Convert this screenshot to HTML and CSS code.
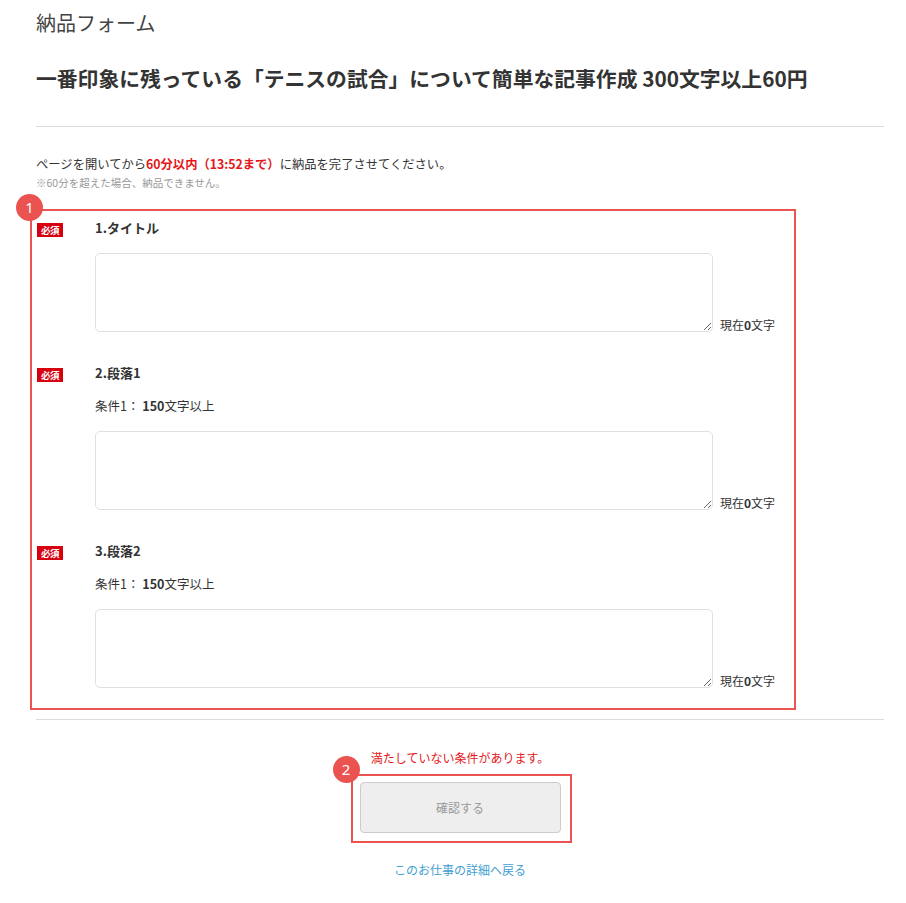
FILE: index.html
```html
<!DOCTYPE html>
<html lang="ja">
<head>
<meta charset="utf-8">
<title>納品フォーム</title>
<link rel="stylesheet" href="styles.css">
</head>
<body>
<div class="page">
  <h1 class="page-title">納品フォーム</h1>
  <h2 class="job-title">一番印象に残っている「テニスの試合」について簡単な記事作成 300文字以上60円</h2>
  <hr class="rule">
  <p class="limit">ページを開いてから<span class="limit-em">60分以内（13:52まで）</span>に納品を完了させてください。</p>
  <p class="limit-note">※60分を超えた場合、納品できません。</p>

  <div class="annot annot-form">
    <span class="annot-num">1</span>
    <div class="item">
      <span class="req">必須</span>
      <div class="item-body">
        <div class="item-label">1.タイトル</div>
        <div class="field-row">
          <textarea class="field"></textarea>
          <span class="counter">現在<b>0</b>文字</span>
        </div>
      </div>
    </div>
    <div class="item">
      <span class="req">必須</span>
      <div class="item-body">
        <div class="item-label">2.段落1</div>
        <div class="cond">条件1： <b>150</b>文字以上</div>
        <div class="field-row">
          <textarea class="field"></textarea>
          <span class="counter">現在<b>0</b>文字</span>
        </div>
      </div>
    </div>
    <div class="item">
      <span class="req">必須</span>
      <div class="item-body">
        <div class="item-label">3.段落2</div>
        <div class="cond">条件1： <b>150</b>文字以上</div>
        <div class="field-row">
          <textarea class="field"></textarea>
          <span class="counter">現在<b>0</b>文字</span>
        </div>
      </div>
    </div>
  </div>

  <hr class="rule rule-bottom">

  <div class="submit-area">
    <p class="error">満たしていない条件があります。</p>
    <div class="annot annot-btn">
      <span class="annot-num">2</span>
      <button class="confirm" type="button">確認する</button>
    </div>
    <a class="back" href="#">このお仕事の詳細へ戻る</a>
  </div>
</div>
</body>
</html>
```

FILE: styles.css
```css
* { box-sizing: border-box; }
html, body { margin: 0; padding: 0; background: #fff; }
body {
  font-family: "Noto Sans CJK JP", "Noto Sans", sans-serif;
  color: #333;
}
.page {
  width: 906px;
  padding: 8px 22px 0 36px;
}
.page-title {
  margin: 0;
  font-size: 20px;
  font-weight: 400;
  line-height: 30px;
  color: #444;
}
.job-title {
  margin: 25px 0 0;
  font-size: 20.8px;
  font-weight: 700;
  line-height: 30px;
  color: #333;
}
.rule {
  border: 0;
  border-top: 1px solid #ddd;
  margin: 33px 0 0;
  height: 0;
}
.limit {
  margin: 27px 0 0;
  font-size: 12.3px;
  line-height: 20px;
  color: #333;
}
.limit-em { color: #e4171a; font-weight: 700; }
.limit-note {
  margin: 1px 0 0;
  font-size: 10.5px;
  line-height: 16px;
  color: #999;
}
.annot {
  position: relative;
  border: 2px solid #ea5350;
}
.annot-num {
  position: absolute;
  width: 27px;
  height: 27px;
  border-radius: 50%;
  background: #ea5350;
  color: #fff;
  font-size: 15px;
  line-height: 27px;
  text-align: center;
  font-family: "Noto Sans", sans-serif;
}
.annot-form {
  margin: 18px 0 0 -6px;
  width: 766px;
  padding: 7px 0 20px 5px;
}
.annot-form .annot-num { left: -16px; top: -17px; }
.item {
  display: flex;
  align-items: flex-start;
}
.item + .item { margin-top: 31px; }
.req {
  flex: 0 0 auto;
  width: 26px;
  height: 14px;
  margin-top: 5px;
  margin-right: 32px;
  background: #d7000f;
  color: #fff;
  font-size: 9.5px;
  line-height: 14px;
  font-weight: 700;
  text-align: center;
  letter-spacing: -0.5px;
}
.item-body { flex: 1; }
.item-label {
  font-size: 13px;
  font-weight: 700;
  line-height: 20px;
  margin-bottom: 13px;
}
.cond {
  font-size: 12.5px;
  line-height: 20px;
  margin-bottom: 13px;
}
.cond b { font-weight: 700; }
.field-row {
  display: flex;
  align-items: flex-end;
  padding-top: 2px;
}
.field {
  width: 618px;
  height: 79px;
  border: 1px solid #e0e0e0;
  border-radius: 5px;
  background: #fff;
  resize: vertical;
  margin: 0;
  font-family: inherit;
}
.counter {
  margin-left: 7px;
  font-size: 12px;
  line-height: 14px;
  color: #333;
}
.rule-bottom { margin-top: 9px; }
.submit-area {
  display: flex;
  flex-direction: column;
  align-items: center;
}
.error {
  margin: 30px 0 0;
  font-size: 12px;
  line-height: 16px;
  color: #e4171a;
}
.annot-btn {
  margin-top: 8px;
  margin-left: 2px;
  padding: 6px 9px 8px 7px;
}
.annot-btn .annot-num { left: -20px; top: -20px; }
.confirm {
  display: block;
  width: 201px;
  height: 51px;
  border: 1px solid #ccc;
  border-radius: 4px;
  background: #eee;
  color: #999;
  font-family: inherit;
  font-size: 12px;
}
.back {
  margin-top: 19px;
  font-size: 12px;
  line-height: 16px;
  color: #3fa0d2;
  text-decoration: none;
}
```
